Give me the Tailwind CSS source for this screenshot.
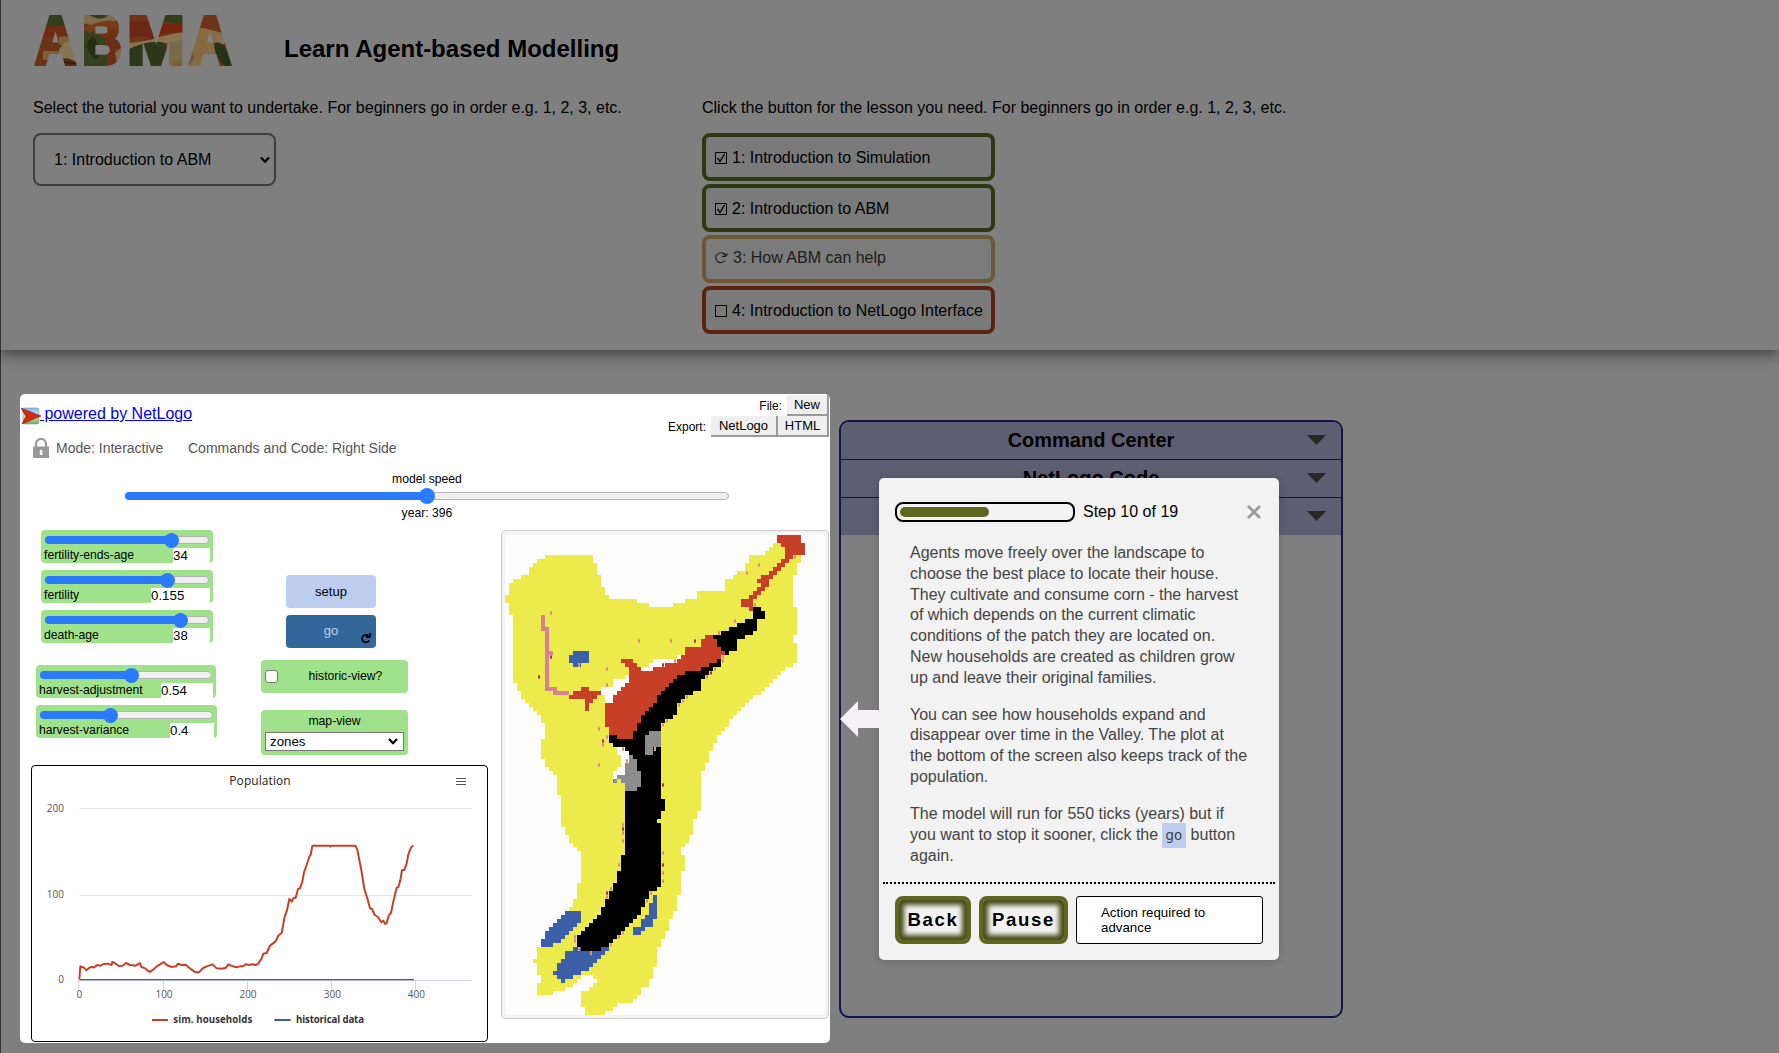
<!DOCTYPE html>
<html lang="en">
<head>
<meta charset="utf-8">
<title>Learn Agent-based Modelling</title>
<script src="https://cdn.jsdelivr.net/npm/@tailwindcss/browser@4"></script>
</head>
<body class="relative h-[1053px] w-[1779px] overflow-hidden bg-[#7f7f7f] font-['Liberation_Sans',Arial,sans-serif] text-black">

<header class="relative flex h-[350px] flex-col border-l border-[#333] bg-[#7f7f7f] pl-8 shadow-[0_4px_14px_rgba(0,0,0,0.5)]">
  <div class="flex h-[91px] items-start pt-[15px]">
    <svg class="h-[51px] w-[201px] shrink-0" viewBox="0 0 201 51">
      <defs><mask id="logo" maskUnits="userSpaceOnUse" x="0" y="0" width="201" height="51"><g font-family="Liberation Sans" font-weight="700" font-size="68" fill="#fff" stroke="#fff" stroke-width="4"><text x="2" y="49" textLength="41" lengthAdjust="spacingAndGlyphs">A</text><text x="49" y="49" textLength="40" lengthAdjust="spacingAndGlyphs">B</text><text x="94" y="49" textLength="58" lengthAdjust="spacingAndGlyphs">M</text><text x="156" y="49" textLength="42" lengthAdjust="spacingAndGlyphs">A</text></g></mask></defs>
      <g mask="url(#logo)">
        <rect width="201" height="51" fill="#6b3416"/>
        <path d="M0 0H48V12Q24 10 0 14Z" fill="#333f1c"/>
        <path d="M0 14Q24 8 42 14L44 25Q24 18 0 26Z" fill="#6f2a14"/>
        <path d="M10 36H26V45H10ZM26 22Q34 20 42 24V30H26Z" fill="#7b6034"/>
        <path d="M26 35Q34 20 44 32L44 46Q34 46 26 42Z" fill="#857456"/>
        <path d="M28 44Q38 41 46 51H28Z" fill="#5a2812"/>
        <path d="M30 47 46 49" stroke="#2c1c0c" stroke-width="1.5"/>
        <path d="M48 14Q60 14 72 24Q76 36 74 51H48Z" fill="#36401f"/>
        <path d="M50 0H86V4Q70 14 50 8Z" fill="#7d6b4b"/>
        <path d="M56 0H76Q68 7 56 0Z" fill="#333f1c"/>
        <path d="M50 14Q76 0 90 10V18Q76 8 56 18Z" fill="#793a16"/>
        <path d="M54 28Q60 16 64 28Q70 40 62 44Q54 38 54 28Z" fill="#252e14"/>
        <path d="M72 22Q80 34 74 51H92V20Z" fill="#6b2d18"/>
        <path d="M82 38Q86 32 92 34V46L84 49Z" fill="#7d6b4b"/>
        <path d="M96 6H120V30H96Z" fill="#6b2614"/>
        <path d="M96 0H118V6H96ZM96 22H116V28H96Z" fill="#6e3417"/>
        <path d="M96 28Q116 26 126 22L152 16V28Q130 26 96 36Z" fill="#8a7350"/>
        <path d="M96 34Q118 24 132 28Q136 40 130 51H96Z" fill="#2c381a"/>
        <path d="M124 0H152V8Q140 10 130 6Z" fill="#333f1c"/>
        <path d="M124 8Q140 10 152 9V18Q138 16 120 20Z" fill="#76240f"/>
        <path d="M134 28 152 24V51H134Z" fill="#7b6a4c"/>
        <path d="M140 48Q146 42 152 46V51H140Z" fill="#7b6034"/>
        <path d="M164 0H186L192 16Q176 16 164 8Z" fill="#6e3417"/>
        <path d="M150 36Q162 8 174 14L190 18 192 24 174 51H150Z" fill="#866b42"/>
        <path d="M184 20H192V28L182 34Z" fill="#827256"/>
        <path d="M181 28Q192 24 201 51H192Q181 42 181 28Z" fill="#283217"/>
        <path d="M155 36Q164 40 160 46L154 51H151Z" fill="#6a5a40"/>
      </g>
    </svg>
    <h1 class="ml-[50px] mt-[18px] text-2xl font-bold leading-8">Learn Agent-based Modelling</h1>
  </div>
  <div class="flex">
    <section class="w-[669px] text-base">
      <p class="leading-[34px]">Select the tutorial you want to undertake. For beginners go in order e.g. 1, 2, 3, etc.</p>
      <div class="mt-2 flex h-[53px] w-[243px] items-center justify-between rounded-lg border-2 border-[#3f3f3f] pl-[19px] pr-1">
        <span>1: Introduction to ABM</span>
        <svg class="h-2 w-[10px]" viewBox="0 0 10 8" fill="none" stroke="black" stroke-width="2.2"><path d="M1 1.5 5 5.7 9 1.5"/></svg>
      </div>
    </section>
    <section class="text-base">
      <p class="leading-[34px]">Click the button for the lesson you need. For beginners go in order e.g. 1, 2, 3, etc.</p>
      <div class="mt-2 flex w-[293px] flex-col gap-[3px]">
        <div class="flex h-12 items-center whitespace-nowrap rounded-lg border-4 border-[#2f3811] bg-[#7a7a7a] pl-[9px] pt-[2px]">
          <svg class="mr-[5px] size-3" viewBox="0 0 12 12" fill="none" stroke="black"><path d="M.5 .5h11v11H.5z"/><path d="M2.5 6 5 9.5 9.5 2" stroke-width="1.3"/></svg>1: Introduction to Simulation</div>
        <div class="flex h-12 items-center whitespace-nowrap rounded-lg border-4 border-[#2f3811] bg-[#7a7a7a] pl-[9px] pt-[2px]">
          <svg class="mr-[5px] size-3" viewBox="0 0 12 12" fill="none" stroke="black"><path d="M.5 .5h11v11H.5z"/><path d="M2.5 6 5 9.5 9.5 2" stroke-width="1.3"/></svg>2: Introduction to ABM</div>
        <div class="flex h-12 items-center whitespace-nowrap rounded-lg border-4 border-[#6e5734] bg-[#7b7b7b] pb-[2px] pl-2 text-[#1c1c1c]">
          <svg class="mr-[5px] h-3 w-[14px]" viewBox="0 0 14 12" fill="none" stroke="#1c1c1c" stroke-width="1.1"><path d="M10.8 2.6A5 5 0 1 0 11 8.5M8 4.4l3 .2L13.6 2M11 4.6V1"/></svg>3: How ABM can help</div>
        <div class="flex h-12 items-center whitespace-nowrap rounded-lg border-4 border-[#5b2410] bg-[#7a7a7a] pl-[9px] pt-[2px]">
          <svg class="mr-[5px] size-3" viewBox="0 0 12 12" fill="none" stroke="black"><path d="M.5 .5h11v11H.5z"/></svg>4: Introduction to NetLogo Interface</div>
      </div>
    </section>
  </div>
</header>

<main class="flex h-[703px] items-start border-l border-[#333] pl-[19px] pt-[44px]">
  <section class="flex h-[649px] w-[810px] shrink-0 flex-col rounded-[5px] bg-white">
    <div class="flex h-[43px] justify-between">
      <div class="flex h-10 items-center pl-[1px] text-base text-[#0000ee]">
        <svg class="mt-[3px] h-[18px] w-5" viewBox="0 0 20 18"><defs><linearGradient id="nl" x2="0" y2="1"><stop offset="0" stop-color="#7fb4f0"/><stop offset=".45" stop-color="#d8ecfa"/><stop offset=".55" stop-color="#c8e8b0"/><stop offset="1" stop-color="#6db04a"/></linearGradient></defs><rect x="2" y="1" width="16" height="16" rx="2" fill="url(#nl)" stroke="#7a9a9a" stroke-width=".6"/><path d="M0 1 20 9 1 17 5 9.5Z" fill="#d42a10" stroke="#7a1a0a" stroke-width=".6"/></svg>
        <a class="-ml-px whitespace-pre underline"> powered by NetLogo</a>
      </div>
      <div class="flex flex-col items-end pr-px pt-[1px] text-xs">
        <div class="flex h-[21px] items-center">File:<span class="ml-[5px] flex h-[21px] w-[42px] items-center justify-center border-b-2 border-r-2 border-[#9a9a9a] bg-[#efefef] text-[13px]">New</span></div>
        <div class="flex h-[21px] items-center">Export:<span class="ml-[5px] flex h-[21px] w-[67px] items-center justify-center border-b-2 border-r-2 border-[#9a9a9a] bg-[#efefef] text-[13px]">NetLogo</span><span class="flex h-[21px] w-[51px] items-center justify-center border-b-2 border-r-2 border-[#9a9a9a] bg-[#efefef] text-[13px]">HTML</span></div>
      </div>
    </div>
    <div class="flex h-[22px] items-center pl-[13px] text-sm text-[#555]">
      <svg class="h-5 w-4" viewBox="0 0 16 20"><path d="M3 9V6a5 5 0 0 1 10 0v3" fill="none" stroke="#999" stroke-width="2.2"/><path d="M0 8.5h16V20H0z" fill="#999"/><path d="M6.8 12h2.6v5H6.8z" fill="#fff"/></svg>
      <span class="ml-[7px] w-[132px]">Mode: Interactive</span><span>Commands and Code: Right Side</span>
    </div>
    <div class="mt-[12px] flex flex-col items-center pl-1 text-xs leading-[14px]">
      <span class="translate-y-px text-[12.2px]">model speed</span>
      <div class="mt-[3px] flex h-4 w-[604px] items-center"><div class="relative h-2 w-full rounded-full border border-[#b2b2b2] bg-[#efefef]"><i class="absolute -left-px -top-px h-2 w-[302px] rounded-full bg-[#2a7bff]"></i><i class="absolute -top-[5px] left-[293px] size-4 rounded-full bg-[#2a7bff]"></i></div></div>
      <span class="mb-px mt-[2px] text-[12.2px]">year: 396</span>
    </div>
    <div class="flex">
      <div class="w-[481px] pt-[9px]">
        <div class="flex h-[235px]">
          <div class="w-[241px] pl-4 text-xs">
            <div id="s1" class="flex flex-col gap-[7px] pl-[5px]"></div>
            <div id="s2" class="mt-[22px] flex flex-col gap-[7px]"></div>
          </div>
          <div class="w-[147px] pt-[45px] text-center text-[12.2px]">
            <div class="ml-[25px] flex h-[33px] w-[90px] items-center justify-center rounded bg-[#bccdf0] text-[13px]">setup</div>
            <div class="relative ml-[25px] mt-[7px] flex h-[33px] w-[90px] items-center justify-center rounded bg-[#336699] pb-[2px] text-[13px] text-[#bccdf0]">go
              <svg class="absolute bottom-[5px] right-[5px] h-[10px] w-[10px]" viewBox="0 0 10 10" fill="none" stroke="black" stroke-width="1.8"><path d="M7.6 3A3.8 3.8 0 1 0 8.2 7.4M9 0v4H5"/></svg></div>
            <div class="mt-3 flex h-[33px] items-center rounded bg-[#a0e28c] pl-1"><i class="size-[13px] rounded-[3px] border border-[#767676] bg-white"></i><span class="ml-5 w-[95px] text-center">historic-view?</span></div>
            <div class="mt-[17px] h-[45px] rounded bg-[#a0e28c] px-1 pt-[3px] leading-4">map-view
              <div class="mt-[3px] flex h-[19px] items-center justify-between border border-[#767676] bg-white pl-1 pr-[5px] text-[13.3px]">zones<svg class="h-[7px] w-[10px]" viewBox="0 0 10 7" fill="none" stroke="black" stroke-width="2.2"><path d="M1 1 5 5.2 9 1"/></svg></div></div>
          </div>
        </div>
        <div class="ml-[11px] h-[277px] w-[457px] rounded border border-black">
          <svg class="h-[275px] w-[455px]" viewBox="36 33 1365 825" font-family="Open Sans, sans-serif" font-size="29" fill="#555">
            <g stroke="#e6e6e6" stroke-width="3"><path d="M178 160.5H1356M178 421.5H1356"/></g>
            <path d="M175 676.5H1356M175.5 676V704M430.5 676V704M682.5 676V704M934.5 676V704M1186.5 676V704" stroke="#ccd6eb" stroke-width="3" fill="none"/>
            <path d="M1308 70.5H1338M1308 79.5H1338M1308 88.5H1338" stroke="#555" stroke-width="3"/>
            <path d="M178 674H1182" stroke="#3d5fa8" stroke-width="4"/>
            <path d="M178 672 181 634 186 636 192 638 199 646 208 638 214 636 222 637 232 630 242 632 250 627 262 626 275 630 277 621 284 624 297 633 308 632 318 624 330 630 347 632 360 624 364 636 376 640 384 648 391 650 402 642 410 634 420 628 431 621 440 630 455 636 468 634 474 626 484 630 497 629 505 636 515 644 527 652 537 652 548 640 560 634 578 628 590 640 605 641 618 638 625 628 638 634 650 637 660 634 670 634 676 628 688 630 698 628 705 630 713 628 724 612 730 596 740 594 750 572 766 560 776 541 785 534 794 485 801 466 808 432 815 440 820 430 827 428 834 402 840 400 847 380 852 352 860 330 868 305 872 300 877 272 928 272 931 275 934 272 1006 272 1012 284 1018 315 1024 345 1033 402 1042 430 1050 460 1056 462 1064 480 1074 486 1084 502 1090 497 1096 507 1100 504 1107 480 1113 474 1120 440 1130 398 1135 396 1141 376 1146 345 1153 345 1160 325 1165 298 1173 278 1180 271" fill="none" stroke="#c83f28" stroke-width="6" stroke-linejoin="round"/>
            <text x="720" y="90" text-anchor="middle" font-size="36" fill="#222" textLength="184">Population</text>
            <g text-anchor="end" font-size="30"><text x="132" y="171">200</text><text x="132" y="429">100</text><text x="132" y="684">0</text></g>
            <g text-anchor="middle" font-size="30"><text x="178" y="729">0</text><text x="432" y="729">100</text><text x="684" y="729">200</text><text x="937" y="729">300</text><text x="1189" y="729">400</text></g>
            <path d="M396 795H444" stroke="#c83f28" stroke-width="6"/><path d="M763 795H812" stroke="#3d5fa8" stroke-width="6"/>
            <g font-weight="700" font-size="29" fill="#333"><text x="460" y="804" textLength="237">sim. households</text><text x="828" y="804" textLength="204">historical data</text></g>
          </svg>
        </div>
      </div>
      <div class="mt-[9px] h-[489px] w-[328px] rounded border border-[#ccc] bg-[#f3f3f3] px-[3px] pt-1">
        <svg class="h-[480px] w-80 rounded-[3px] bg-[#fdfdfd]" viewBox="30 45 960 1440" shape-rendering="crispEdges">
          <path fill="#edea4b" d="M150 105H294V129H306V165H318V201H330V225H342V237H426V249H462V261H534V249H570V237H606V213H690V177H714V165H726V153H750V129H762V105H810V93H822V81H834V69H918V129H906V165H894V261H906V345H894V369H906V429H894V441H870V453H858V465H846V477H834V489H822V501H810V513H798V525H774V537H762V549H750V561H738V573H726V585H714V597H702V621H690V633H678V645H666V669H654V693H642V729H630V753H618V873H606V897H594V945H582V969H570V981H558V1005H570V1053H558V1125H546V1173H534V1197H522V1233H510V1257H498V1281H486V1341H474V1377H462V1401H438V1425H426V1437H414V1449H366V1461H354V1473H330V1485H270V1461H258V1413H282V1401H294V1389H306V1377H294V1365H258V1377H246V1389H234V1401H210V1413H174V1425H126V1389H138V1365H126V1329H114V1317H126V1281H138V1257H150V1233H162V1221H174V1209H186V1197H198V1185H210V1173H222V1161H234V1137H246V1089H258V993H246V981H234V969H222V945H210V921H198V825H186V765H174V753H162V741H150V717H138V657H150V609H138V585H126V573H114V561H102V549H90V537H78V513H66V489H54V285H42V249H30V225H42V189H54V177H78V165H102V141H114V129H126V117H150Z"/>
          <path fill="#fff" d="M354 477H390V465H402V489H390V501H378V513H366V525H354V549H330V525H318V501H354ZM474 417H546V405H558V417H546V429H510V441H474V453H438V441H462V429H474ZM366 681H390V693H402V729H390V765H366V777H354V753H366V741H378V705H366Z"/>
          <path fill="#c83f28" d="M630 345H654V357H666V381H678V393H690V405H678V417H666V429H642V441H618V453H570V465H546V477H534V489H522V501H510V513H498V525H486V549H474V561H462V573H450V585H438V609H426V633H414V657H366V645H342V621H330V549H354V525H366V513H378V501H390V489H402V441H390V429H378V417H414V429H426V441H438V453H474V441H510V429H546V417H558V405H570V381H618V357H630ZM846 45H918V69H930V105H894V117H882V129H870V141H858V153H846V165H834V177H822V201H810V213H798V225H786V237H774V273H762V261H738V237H762V225H774V213H786V201H798V189H786V177H798V165H822V153H834V141H846V129H858V117H870V81H858V69H846ZM258 501H282V513H318V525H306V537H294V549H282V573H270V537H222V525H234V513H258Z"/>
          <path d="M774 261H798V273H810V297H786V333H774V345H750V357H726V393H702V405H690V393H678V381H666V357H654V345H678V333H702V321H726V309H750V297H774ZM666 417H678V441H654V453H642V465H630V477H618V513H594V525H570V537H558V549H546V585H534V597H510V609H498V837H510V873H498V897H486V909H498V1101H486V1113H462V1137H450V1161H438V1185H426V1197H414V1209H402V1221H390V1233H378V1245H366V1257H354V1269H342V1281H318V1293H258V1281H246V1245H258V1233H270V1221H282V1209H294V1197H306V1185H318V1161H330V1137H342V1113H354V1089H366V1053H378V1005H390V813H426V801H438V753H426V717H414V705H402V693H390V681H354V669H342V645H366V657H414V633H426V609H438V585H450V573H462V561H474V549H486V525H498V513H510V501H522V489H534V477H546V465H570V453H618V441H642V429H666Z"/>
          <path fill="#8d8d8d" d="M402 705H414V717H426V753H438V801H426V813H390V789H378V777H366V789H354V777H366V765H390V729H402ZM462 633H498V681H474V705H450V645H462Z"/>
          <path fill="#d78294" d="M138 285H150V321H162V393H174V405H162V501H186V513H222V525H174V513H150V333H138Z"/>
          <path fill="#3d5fa8" d="M234 393H282V429H258V441H234V429H222V405H234ZM210 1173H258V1209H246V1221H234V1233H222V1245H210V1257H198V1269H174V1281H138V1257H150V1233H162V1221H174V1209H186V1197H198V1185H210ZM234 1281H258V1293H318V1281H342V1293H330V1305H318V1317H306V1329H294V1341H282V1353H258V1365H234V1377H210V1389H198V1377H186V1365H174V1353H186V1329H198V1317H210V1293H234ZM474 1125H486V1197H474V1221H450V1233H438V1245H414V1221H438V1197H450V1185H462V1149H474Z"/>
          <g id="houses"></g>
        </svg>
      </div>
    </div>
  </section>

  <section class="ml-[9px] mt-[26px] h-[598px] w-[504px] shrink-0 overflow-hidden rounded-[10px] border-2 border-[#13134a] text-xl font-bold">
    <div class="flex h-[38px] items-center border-b border-[#13134a] bg-[#5e5e72] pb-[2px]"><span class="w-full text-center">Command Center</span><svg class="-ml-[34px] mr-[15px] h-[10px] w-[19px] shrink-0" viewBox="0 0 19 10"><path d="M0 0H19L9.5 10Z" fill="#272727"/></svg></div>
    <div class="flex h-[38px] items-center border-b border-[#13134a] bg-[#5e5e72] pb-[2px]"><span class="w-full text-center">NetLogo Code</span><svg class="-ml-[34px] mr-[15px] h-[10px] w-[19px] shrink-0" viewBox="0 0 19 10"><path d="M0 0H19L9.5 10Z" fill="#272727"/></svg></div>
    <div class="flex h-[37px] items-center justify-end bg-[#5e5e72] pb-px"><svg class="mr-[15px] h-[10px] w-[19px]" viewBox="0 0 19 10"><path d="M0 0H19L9.5 10Z" fill="#272727"/></svg></div>
  </section>
</main>

<div class="absolute left-[879px] top-[478px] flex h-[482px] w-[400px] flex-col rounded-[5px] bg-[#f2f2f2] shadow-[0_1px_8px_rgba(0,0,0,0.2)]">
  <svg class="absolute -left-[39px] top-[223px] h-9 w-10" viewBox="0 0 40 36"><path d="M0 18 18 0V9H40V27H18V36Z" fill="#f3f1f3"/></svg>
  <div class="flex h-[69px] items-center px-4 pb-[1px]">
    <div class="h-5 w-[180px] rounded-lg border-2 border-black bg-[#f3f3f3] p-[3px]"><div class="h-[10px] w-[89px] rounded-full bg-[#5e6620]"></div></div>
    <span class="ml-2">Step 10 of 19</span>
    <svg class="ml-auto mr-[2px] size-[14px]" viewBox="0 0 14 14"><path d="M1 1 13 13M13 1 1 13" stroke="#999" stroke-width="2.8"/></svg>
  </div>
  <div class="flex h-[335px] flex-col gap-4 whitespace-nowrap pl-[31px] text-base leading-[20.8px] text-[#444]">
    <p class="-mt-1">Agents move freely over the landscape to<br>choose the best place to locate their house.<br>They cultivate and consume corn - the harvest<br>of which depends on the current climatic<br>conditions of the patch they are located on.<br>New households are created as children grow<br>up and leave their original families.</p>
    <p>You can see how households expand and<br>disappear over time in the Valley. The plot at<br>the bottom of the screen also keeps track of the<br>population.</p>
    <p>The model will run for 550 ticks (years) but if<br>you want to stop it sooner, click the <span class="-ml-px bg-[#bccdf0] px-1 py-[5px] font-['DejaVu_Sans'] text-[13.3px]">go</span> button<br>again.</p>
  </div>
  <div class="mx-1 border-t-2 border-dotted border-black"></div>
  <div class="flex h-[60px] gap-2 px-4 pt-3">
    <div class="flex h-12 w-[76px] items-center justify-center rounded-lg border-4 border-[#5e6620] bg-[#f3f3f3] pb-px text-[18.6px] font-bold tracking-[1.6px] shadow-[inset_0_0_5px_5px_#454f18]">Back</div>
    <div class="flex h-12 w-[89px] items-center justify-center rounded-lg border-4 border-[#5e6620] bg-[#f3f3f3] pb-px text-[18.6px] font-bold tracking-[1.6px] shadow-[inset_0_0_5px_5px_#454f18]">Pause</div>
    <div class="h-12 w-[187px] rounded-[3px] border border-black bg-white pl-6 pt-2 text-[13.3px] leading-[15px]">Action required to<br>advance</div>
  </div>
</div>

<script>
  // [label, value, widget width, thumb centre, value box left edge, value box width]
  const slider = ([label, value, w, thumb, left, vw]) => `
    <div class="relative h-[33px] rounded bg-[#a0e28c] px-1 pt-[6px]" style="width:${w}px">
      <div class="relative h-2 rounded-full border border-[#b2b2b2] bg-[#efefef]">
        <i class="absolute -left-px -top-px h-2 rounded-full bg-[#2a7bff]" style="width:${thumb - 4}px"></i>
        <i class="absolute -top-[4.5px] size-[15px] rounded-full bg-[#2a7bff]" style="left:${thumb - 13}px"></i>
      </div>
      <span class="absolute left-[3px] top-[17px] text-[12.2px] leading-4">${label}</span>
      <span class="absolute bottom-0 h-[15px] bg-white text-[13.3px] leading-[15px]" style="left:${left}px;width:${vw}px">${value}</span>
    </div>`;
  document.getElementById('s1').innerHTML = [
    ['fertility-ends-age', '34', 172, 131, 132, 37],
    ['fertility', '0.155', 172, 127, 110, 59],
    ['death-age', '38', 172, 140, 132, 37]].map(slider).join('');
  document.getElementById('s2').innerHTML = [
    ['harvest-adjustment', '0.54', 180, 96, 125, 52],
    ['harvest-variance', '0.4', 181, 75, 134, 44]].map(slider).join('');

  // small house markers on the map: x, y, dark
  const houses = [[900,111],[792,135],[756,159],[780,255],[720,303],[672,339],[168,279],[432,363],[528,363],[600,363,1],[336,447],[336,495],[168,411,1],[132,471,1],[252,435],[504,435,1],[540,423],[684,411],[684,423],[660,447],[648,459,1],[636,471],[576,531],[564,543],[552,555],[516,603],[504,615],[480,687],[312,627],[336,651],[324,663,1],[324,675],[312,735],[384,687],[396,723],[504,795,1],[384,915],[384,927,1],[384,939],[384,963],[504,999],[504,1035,1],[504,1059],[504,1083],[372,1035],[348,1107],[336,1119,1],[336,1131],[468,1119],[456,1143],[384,1239],[372,1251],[348,1275],[240,1251],[240,1263],[252,1287],[288,1299]];
  document.getElementById('houses').innerHTML = houses.map(([x, y, d]) =>
    `<rect x="${x-3}" y="${y-6}" width="6" height="12" fill="${d ? '#c4706a' : '#e3a77a'}"/><rect x="${x-3}" y="${y-3}" width="6" height="6" fill="${d ? '#9a3a50' : '#d98e80'}"/>`).join('');
</script>
</body>
</html>
